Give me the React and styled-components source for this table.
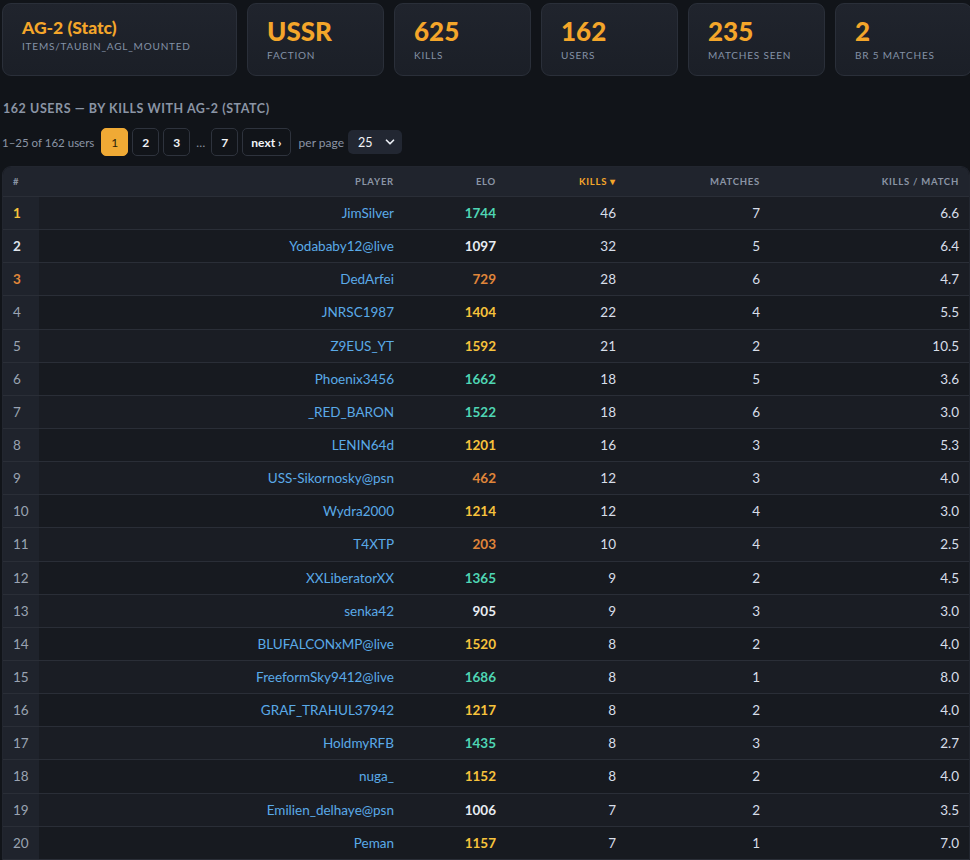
import React from 'react';
import styled, { createGlobalStyle } from 'styled-components';
import { ChevronDown } from 'lucide-react';

const GlobalStyle = createGlobalStyle`
  html, body {
    margin: 0;
    background: #111419;
    overflow: hidden;
  }
  body {
    font-family: Lato, "Liberation Sans", sans-serif;
    color: #d8dee9;
  }
`;

const Page = styled.div`
  padding: 3px 0 0 2px;
`;

const CardRow = styled.div`
  display: flex;
  gap: 10px;
  width: 1000px;
`;

const StatCard = styled.div`
  flex: 0 0 ${props => (props.wide ? '235px' : '137px')};
  height: 73px;
  box-sizing: border-box;
  padding: ${props => (props.wide ? '14px 19px' : '13px 19px')};
  background: linear-gradient(180deg, #20242d 0%, #1b1f27 100%);
  border: 1px solid #2a2f39;
  border-radius: 9px;
`;

const CardTitle = styled.div`
  font-size: 17.5px;
  font-weight: 900;
  line-height: 20px;
  color: #f4a62a;
`;

const CardValue = styled.div`
  font-size: 26px;
  font-weight: 900;
  line-height: 28px;
  color: #f4a62a;
`;

const CardLabel = styled.div`
  margin-top: ${props => (props.small ? '2px' : '4px')};
  font-size: 10px;
  line-height: 13px;
  letter-spacing: 0.08em;
  text-transform: uppercase;
  color: #8391a6;
`;

const SectionTitle = styled.h2`
  margin: 26px 0 0 1px;
  font-size: 12.5px;
  font-weight: 700;
  line-height: 14px;
  letter-spacing: 0.045em;
  text-transform: uppercase;
  color: #8b95a5;
`;

const Pager = styled.div`
  display: flex;
  align-items: center;
  gap: 4px;
  margin-top: 12px;
  height: 28px;
`;

const PagerInfo = styled.span`
  font-size: 11.5px;
  color: #8b95a5;
  margin-right: 3px;
`;

const PageButton = styled.button`
  height: 28px;
  min-width: 27px;
  padding: 0 8px;
  box-sizing: border-box;
  border-radius: 5px;
  border: 1px solid ${props => (props.active ? '#f0aa35' : '#2e333d')};
  background: ${props => (props.active ? '#f0aa35' : '#111419')};
  color: ${props => (props.active ? '#2a1d08' : '#f2f4f7')};
  font-family: inherit;
  font-size: 12px;
  font-weight: ${props => (props.active ? 400 : 700)};
`;

const Ellipsis = styled.span`
  font-size: 12px;
  color: #8b95a5;
  padding: 0 2px;
`;

const PerPage = styled.span`
  font-size: 12px;
  color: #8b95a5;
  margin-left: 4px;
`;

const SelectBox = styled.div`
  position: relative;
  width: 54px;
  height: 24px;
`;

const Select = styled.select`
  appearance: none;
  width: 100%;
  height: 100%;
  border: none;
  border-radius: 5px;
  background: #222732;
  color: #f2f4f7;
  font-family: inherit;
  font-size: 12.5px;
  padding: 0 0 0 10px;
`;

const SelectIcon = styled(ChevronDown)`
  position: absolute;
  right: 5px;
  top: 5px;
  pointer-events: none;
  color: #e8ecf2;
`;

const TableWrap = styled.div`
  margin-top: 10px;
  width: 966px;
  border-radius: 9px 9px 0 0;
  overflow: hidden;
  border: 1px solid #22262f;
  border-bottom: none;
`;

const Table = styled.table`
  width: 100%;
  border-collapse: collapse;
  table-layout: fixed;
`;

const HeadCell = styled.th`
  height: 29px;
  padding: 0 10px;
  background: #20242d;
  border-bottom: 1px solid #2a2e37;
  font-size: 9.5px;
  font-weight: 700;
  letter-spacing: 0.08em;
  text-transform: uppercase;
  text-align: ${props => (props.left ? 'left' : 'right')};
  color: ${props => (props.sorted ? '#f4a62a' : '#8b95a5')};
`;

const Row = styled.tr`
  background: ${props => (props.odd ? '#1a1d24' : '#171a20')};
  border-bottom: 1px solid #2a2e37;
`;

const Cell = styled.td`
  height: 32.15px;
  padding: 0 10px;
  font-size: 13.5px;
  text-align: right;
  color: #d8dee9;
`;

const RankCell = styled(Cell)`
  text-align: left;
  background: #1f232c;
  font-weight: ${props => (props.top ? 700 : 400)};
  color: ${props => props.color};
`;

const PlayerCell = styled(Cell)`
  color: #5aaae8;
`;

const EloCell = styled(Cell)`
  font-weight: 700;
  color: ${props => props.color};
`;

const ELO = {
  teal: '#4fd6b4',
  white: '#e8ecf2',
  orange: '#e0863a',
  yellow: '#f7c33c',
};

const RANK = ['#f7c33c', '#dfe4ec', '#e0863a'];

const rows = [
  ['JimSilver', 1744, 'teal', 46, 7, '6.6'],
  ['Yodababy12@live', 1097, 'white', 32, 5, '6.4'],
  ['DedArfei', 729, 'orange', 28, 6, '4.7'],
  ['JNRSC1987', 1404, 'yellow', 22, 4, '5.5'],
  ['Z9EUS_YT', 1592, 'yellow', 21, 2, '10.5'],
  ['Phoenix3456', 1662, 'teal', 18, 5, '3.6'],
  ['_RED_BARON', 1522, 'teal', 18, 6, '3.0'],
  ['LENIN64d', 1201, 'yellow', 16, 3, '5.3'],
  ['USS-Sikornosky@psn', 462, 'orange', 12, 3, '4.0'],
  ['Wydra2000', 1214, 'yellow', 12, 4, '3.0'],
  ['T4XTP', 203, 'orange', 10, 4, '2.5'],
  ['XXLiberatorXX', 1365, 'teal', 9, 2, '4.5'],
  ['senka42', 905, 'white', 9, 3, '3.0'],
  ['BLUFALCONxMP@live', 1520, 'yellow', 8, 2, '4.0'],
  ['FreeformSky9412@live', 1686, 'teal', 8, 1, '8.0'],
  ['GRAF_TRAHUL37942', 1217, 'yellow', 8, 2, '4.0'],
  ['HoldmyRFB', 1435, 'teal', 8, 3, '2.7'],
  ['nuga_', 1152, 'yellow', 8, 2, '4.0'],
  ['Emilien_delhaye@psn', 1006, 'white', 7, 2, '3.5'],
  ['Peman', 1157, 'yellow', 7, 1, '7.0'],
];

const stats = [
  ['625', 'Kills'],
  ['162', 'Users'],
  ['235', 'Matches seen'],
  ['2', 'BR 5 matches'],
];

export default function App() {
  return (
    <Page>
      <GlobalStyle />
      <CardRow>
        <StatCard wide>
          <CardTitle>AG-2 (Statc)</CardTitle>
          <CardLabel small>items/taubin_agl_mounted</CardLabel>
        </StatCard>
        <StatCard>
          <CardValue>USSR</CardValue>
          <CardLabel>Faction</CardLabel>
        </StatCard>
        {stats.map(([value, label]) => (
          <StatCard key={label}>
            <CardValue>{value}</CardValue>
            <CardLabel>{label}</CardLabel>
          </StatCard>
        ))}
      </CardRow>

      <SectionTitle>162 users — by kills with AG-2 (Statc)</SectionTitle>

      <Pager>
        <PagerInfo>1–25 of 162 users</PagerInfo>
        <PageButton active>1</PageButton>
        <PageButton>2</PageButton>
        <PageButton>3</PageButton>
        <Ellipsis>…</Ellipsis>
        <PageButton>7</PageButton>
        <PageButton>next ›</PageButton>
        <PerPage>per page</PerPage>
        <SelectBox>
          <Select defaultValue="25">
            <option>10</option>
            <option>25</option>
            <option>50</option>
          </Select>
          <SelectIcon size={14} strokeWidth={3} />
        </SelectBox>
      </Pager>

      <TableWrap>
        <Table>
          <colgroup>
            <col style={{ width: 36 }} />
            <col style={{ width: 365 }} />
            <col style={{ width: 102 }} />
            <col style={{ width: 120 }} />
            <col style={{ width: 144 }} />
            <col />
          </colgroup>
          <thead>
            <tr>
              <HeadCell left>#</HeadCell>
              <HeadCell>Player</HeadCell>
              <HeadCell>Elo</HeadCell>
              <HeadCell sorted>Kills ▾</HeadCell>
              <HeadCell>Matches</HeadCell>
              <HeadCell>Kills / match</HeadCell>
            </tr>
          </thead>
          <tbody>
            {rows.map(([name, elo, tone, kills, matches, kpm], i) => (
              <Row key={name} odd={i % 2 === 0}>
                <RankCell top={i < 3} color={RANK[i] || '#9aa3b2'}>{i + 1}</RankCell>
                <PlayerCell>{name}</PlayerCell>
                <EloCell color={ELO[tone]}>{elo}</EloCell>
                <Cell>{kills}</Cell>
                <Cell>{matches}</Cell>
                <Cell>{kpm}</Cell>
              </Row>
            ))}
          </tbody>
        </Table>
      </TableWrap>
    </Page>
  );
}
